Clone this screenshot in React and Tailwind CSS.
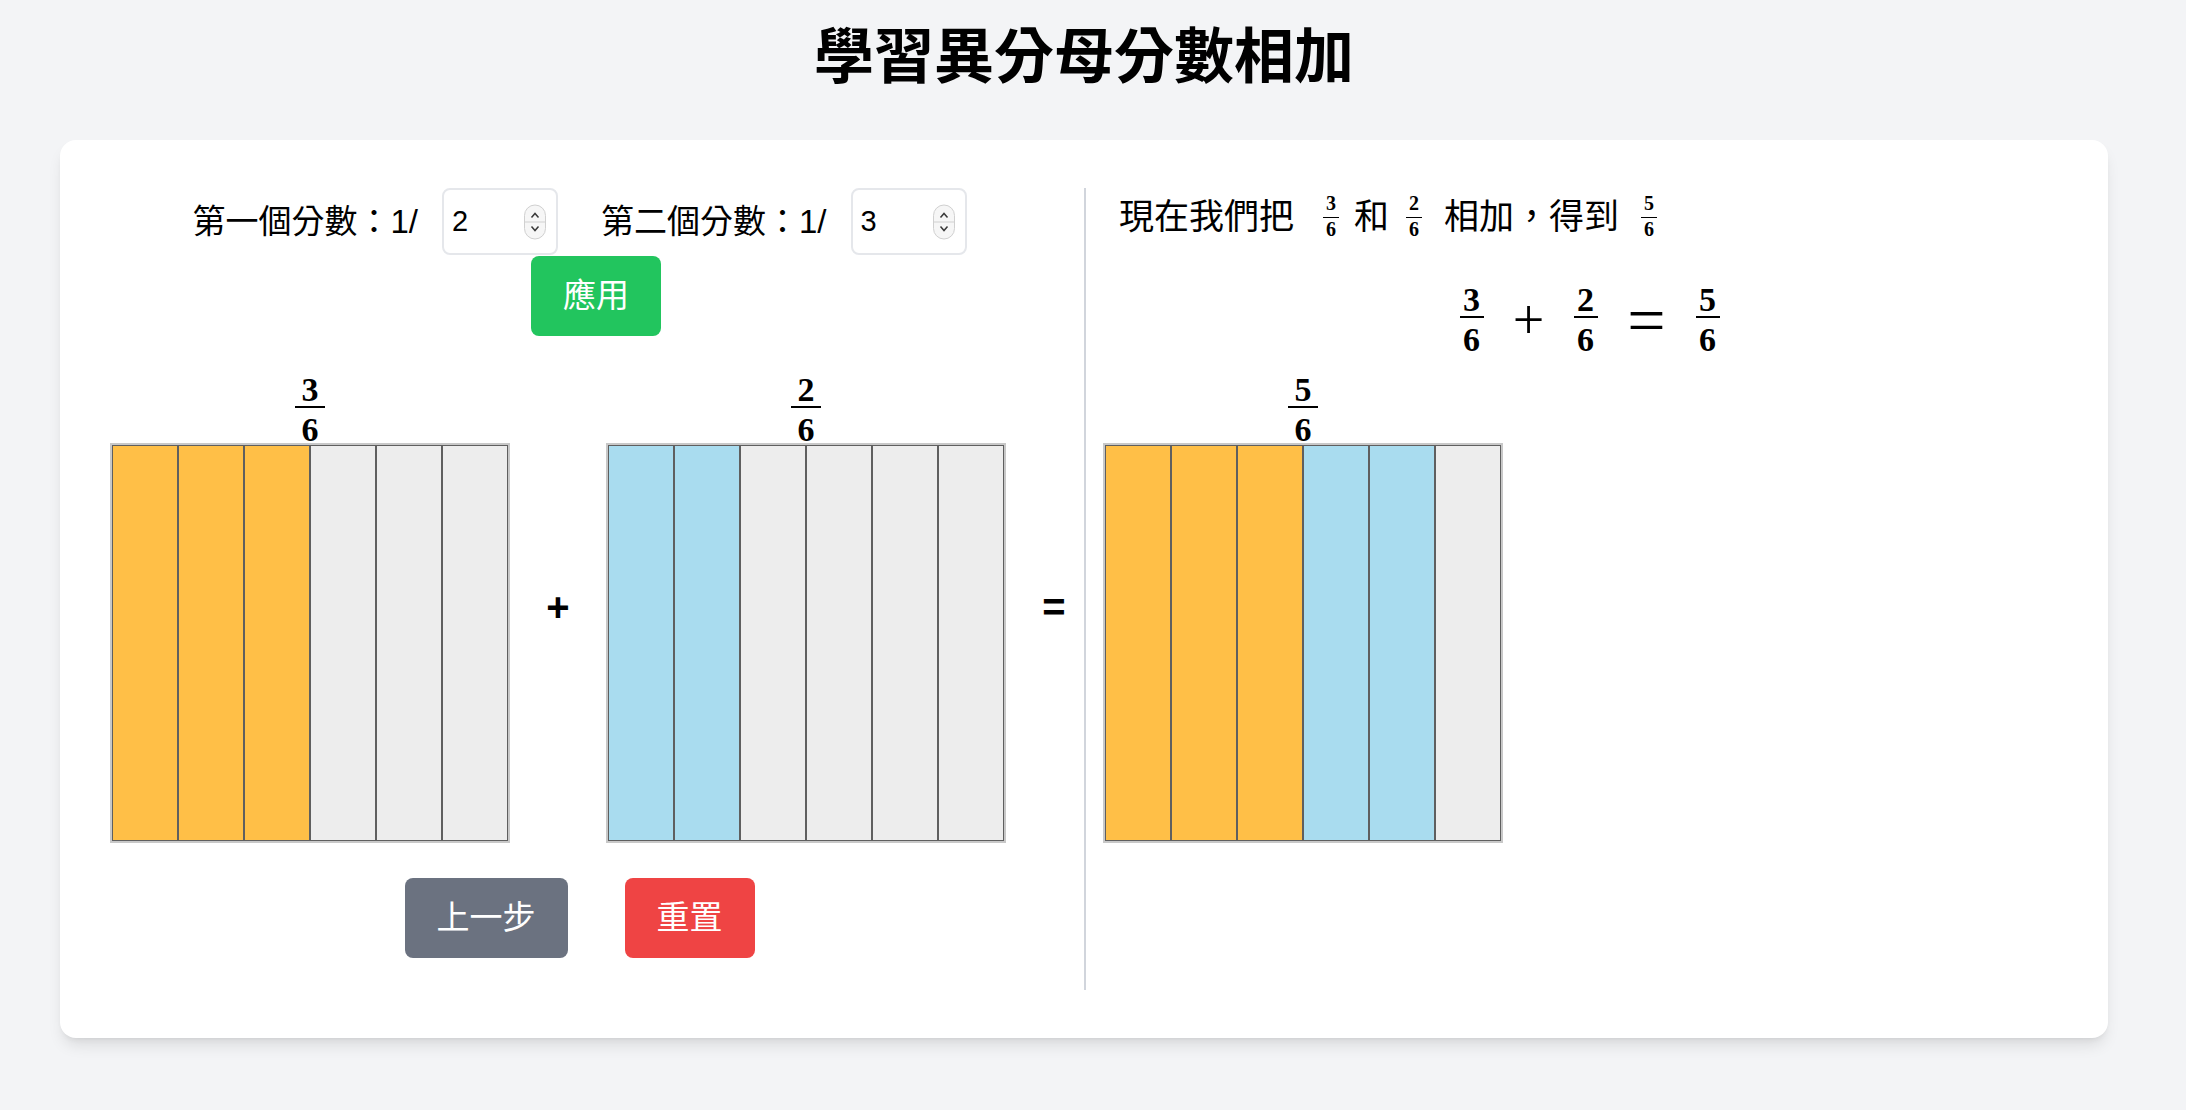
import { useState } from 'react';

const SANS = "[font-family:'Liberation_Sans','Noto_Sans_CJK_TC',sans-serif]";
const SERIF = "[font-family:'Liberation_Serif',serif]";

const FILL = {
  a: 'bg-[#ffbf47]',
  b: 'bg-[#a9dcef]',
  e: 'bg-[#ededed]',
};

function gcd(a, b) {
  return b === 0 ? a : gcd(b, a % b);
}

function Frac({ n, d, line = 'w-[30px]' }) {
  return (
    <span className={`inline-flex flex-col items-center text-[34px] font-bold text-black ${SERIF}`}>
      <span className="block leading-[26px]">{n}</span>
      <span className={`block h-[2px] mt-[3px] bg-black ${line}`} />
      <span className="block leading-[26px] mt-[9px]">{d}</span>
    </span>
  );
}

function SmallFrac({ n, d, className = '' }) {
  return (
    <span className={`inline-flex flex-col items-center text-[20px] font-bold text-black ${SERIF} ${className}`}>
      <span className="block leading-[15px]">{n}</span>
      <span className="block h-px w-[16px] mt-[6px] bg-black" />
      <span className="block leading-[15px] mt-[4px]">{d}</span>
    </span>
  );
}

function Bar({ cells }) {
  return (
    <div className="flex w-[400px] h-[400px] border-2 border-[#c8c8c8]">
      {cells.map((c, i) => (
        <div key={i} className={`flex-1 border border-[#5f5f5f] ${FILL[c]}`} />
      ))}
    </div>
  );
}

function BarGroup({ n, d, cells }) {
  return (
    <div className="flex flex-col items-center">
      <div className="h-[72px] flex items-end">
        <Frac n={n} d={d} />
      </div>
      <Bar cells={cells} />
    </div>
  );
}

function Spinner() {
  return (
    <span className="absolute right-[12px] top-1/2 -translate-y-1/2 w-[22px] h-[35px] rounded-full border border-[#d0d0d0] bg-[#f6f6f6] flex flex-col items-center justify-center">
      <svg width="10" height="8" viewBox="0 0 10 8">
        <path d="M1.5 6 L5 2 L8.5 6" stroke="#3a3a3a" strokeWidth="1.5" fill="none" />
      </svg>
      <span className="w-full h-px bg-[#cfcfcf] my-[2px]" />
      <svg width="10" height="8" viewBox="0 0 10 8">
        <path d="M1.5 2 L5 6 L8.5 2" stroke="#3a3a3a" strokeWidth="1.5" fill="none" />
      </svg>
    </span>
  );
}

function NumberBox({ value, onChange }) {
  return (
    <span className="relative inline-block">
      <input
        type="number"
        min="2"
        value={value}
        onChange={e => onChange(e.target.value)}
        className="w-[116px] h-[67px] pl-[8px] pr-[40px] text-[29px] text-black bg-white border-2 border-[#e5e7eb] rounded-[8px] outline-none [appearance:textfield] [&::-webkit-inner-spin-button]:appearance-none [&::-webkit-outer-spin-button]:appearance-none"
      />
      <Spinner />
    </span>
  );
}

export default function App() {
  const [inA, setInA] = useState('2');
  const [inB, setInB] = useState('3');
  const [dens, setDens] = useState([2, 3]);

  const [a, b] = dens;
  const lcd = (a * b) / gcd(a, b);
  const na = lcd / a;
  const nb = lcd / b;
  const sum = na + nb;

  const cellsA = Array.from({ length: lcd }, (_, i) => (i < na ? 'a' : 'e'));
  const cellsB = Array.from({ length: lcd }, (_, i) => (i < nb ? 'b' : 'e'));
  const cellsSum = Array.from({ length: lcd }, (_, i) => (i < na ? 'a' : i < sum ? 'b' : 'e'));

  const apply = () => {
    const x = parseInt(inA, 10);
    const y = parseInt(inB, 10);
    if (x > 1 && y > 1) setDens([x, y]);
  };

  const reset = () => {
    setInA('2');
    setInB('3');
    setDens([2, 3]);
  };

  return (
    <div className={`min-h-screen bg-[#f3f4f6] pl-[60px] pr-[78px] pb-10 text-black ${SANS}`}>
      <h1 className="text-center text-[60px] leading-[60px] font-bold pt-[28px] mb-[52px]">
        學習異分母分數相加
      </h1>

      <div className="bg-white rounded-2xl shadow-lg p-12 flex">
        {/* 左邊：輸入與長條 */}
        <div className="w-[976px] flex flex-col pb-8">
          <div className="flex items-center justify-center pr-[33px] h-[67px]">
            <span className="text-[33px] leading-none">第一個分數：1/</span>
            <span className="ml-[24px]">
              <NumberBox value={inA} onChange={setInA} />
            </span>
            <span className="text-[33px] leading-none ml-[43px]">第二個分數：1/</span>
            <span className="ml-[24px]">
              <NumberBox value={inB} onChange={setInB} />
            </span>
          </div>

          <button
            onClick={apply}
            className="self-center mt-px h-[80px] px-8 rounded-lg bg-[#22c55e] text-white text-[33px]"
          >
            應用
          </button>

          <div className="flex items-center gap-6 mt-[35px] pl-[2px]">
            <BarGroup n={na} d={lcd} cells={cellsA} />
            <span className="w-12 text-center text-[40px] font-bold leading-none">+</span>
            <BarGroup n={nb} d={lcd} cells={cellsB} />
            <span className="w-12 text-center text-[40px] font-bold leading-none">=</span>
          </div>

          <div className="flex justify-center gap-[57px] pr-[33px] mt-[35px]">
            <button className="h-[80px] px-8 rounded-lg bg-[#6b7280] text-white text-[33px]">上一步</button>
            <button onClick={reset} className="h-[80px] px-8 rounded-lg bg-[#ef4444] text-white text-[33px]">
              重置
            </button>
          </div>
        </div>

        {/* 右邊：說明與結果 */}
        <div className="flex-1 border-l-2 border-gray-300 pl-[17px] flex flex-col">
          <div className="pl-4 h-[56px] flex items-center text-[35px] leading-none">
            <span>現在我們把</span>
            <SmallFrac n={na} d={lcd} className="ml-[29px] mr-[15px]" />
            <span>和</span>
            <SmallFrac n={nb} d={lcd} className="ml-[17px] mr-[22px]" />
            <span>相加，得到</span>
            <SmallFrac n={sum} d={lcd} className="ml-[22px]" />
          </div>

          <div className="mt-[36px] h-[80px] pl-4 flex items-center justify-center gap-[30px]">
            <Frac n={na} d={lcd} line="w-[24px]" />
            <span className={`w-[30px] flex justify-center text-[56px] leading-none ${SERIF}`}>+</span>
            <Frac n={nb} d={lcd} line="w-[24px]" />
            <span className={`w-[38px] flex justify-center text-[68px] leading-none ${SERIF}`}>=</span>
            <Frac n={sum} d={lcd} line="w-[24px]" />
          </div>

          <div className="mt-[11px] self-start">
            <BarGroup n={sum} d={lcd} cells={cellsSum} />
          </div>
        </div>
      </div>
    </div>
  );
}
